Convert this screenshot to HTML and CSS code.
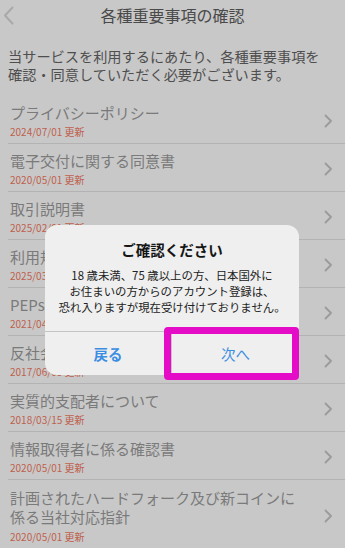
FILE: index.html
```html
<!DOCTYPE html>
<html lang="ja">
<head>
<meta charset="utf-8">
<title>各種重要事項の確認</title>
<link rel="stylesheet" href="styles.css">
</head>
<body>
<div class="screen">
  <header class="nav">
    <span class="back">
      <svg width="11" height="19" viewBox="0 0 11 19"><polyline points="9.5,1.5 2,9.5 9.5,17.5" fill="none" stroke="#a9a9a9" stroke-width="2" stroke-linecap="round" stroke-linejoin="round"/></svg>
    </span>
    <h1 class="nav-title">各種重要事項の確認</h1>
    <span></span>
  </header>
  <p class="intro">当サービスを利用するにあたり、各種重要事項を<br>確認・同意していただく必要がございます。</p>
  <ul class="list">
    <li class="item"><div class="text"><div class="name">プライバシーポリシー</div><div class="date">2024/07/01 更新</div></div><svg class="chev" width="9" height="14" viewBox="0 0 9 14"><polyline points="1.5,1.5 7,7 1.5,12.5" fill="none" stroke="#9b9b9b" stroke-width="1.8" stroke-linecap="round" stroke-linejoin="round"/></svg></li>
    <li class="item"><div class="text"><div class="name">電子交付に関する同意書</div><div class="date">2020/05/01 更新</div></div><svg class="chev" width="9" height="14" viewBox="0 0 9 14"><polyline points="1.5,1.5 7,7 1.5,12.5" fill="none" stroke="#9b9b9b" stroke-width="1.8" stroke-linecap="round" stroke-linejoin="round"/></svg></li>
    <li class="item"><div class="text"><div class="name">取引説明書</div><div class="date">2025/02/01 更新</div></div><svg class="chev" width="9" height="14" viewBox="0 0 9 14"><polyline points="1.5,1.5 7,7 1.5,12.5" fill="none" stroke="#9b9b9b" stroke-width="1.8" stroke-linecap="round" stroke-linejoin="round"/></svg></li>
    <li class="item"><div class="text"><div class="name">利用規約</div><div class="date">2025/03/01 更新</div></div><svg class="chev" width="9" height="14" viewBox="0 0 9 14"><polyline points="1.5,1.5 7,7 1.5,12.5" fill="none" stroke="#9b9b9b" stroke-width="1.8" stroke-linecap="round" stroke-linejoin="round"/></svg></li>
    <li class="item"><div class="text"><div class="name">PEPsについて</div><div class="date">2021/04/01 更新</div></div><svg class="chev" width="9" height="14" viewBox="0 0 9 14"><polyline points="1.5,1.5 7,7 1.5,12.5" fill="none" stroke="#9b9b9b" stroke-width="1.8" stroke-linecap="round" stroke-linejoin="round"/></svg></li>
    <li class="item"><div class="text"><div class="name">反社会的勢力ではないことの表明</div><div class="date">2017/06/05 更新</div></div><svg class="chev" width="9" height="14" viewBox="0 0 9 14"><polyline points="1.5,1.5 7,7 1.5,12.5" fill="none" stroke="#9b9b9b" stroke-width="1.8" stroke-linecap="round" stroke-linejoin="round"/></svg></li>
    <li class="item"><div class="text"><div class="name">実質的支配者について</div><div class="date">2018/03/15 更新</div></div><svg class="chev" width="9" height="14" viewBox="0 0 9 14"><polyline points="1.5,1.5 7,7 1.5,12.5" fill="none" stroke="#9b9b9b" stroke-width="1.8" stroke-linecap="round" stroke-linejoin="round"/></svg></li>
    <li class="item"><div class="text"><div class="name">情報取得者に係る確認書</div><div class="date">2020/05/01 更新</div></div><svg class="chev" width="9" height="14" viewBox="0 0 9 14"><polyline points="1.5,1.5 7,7 1.5,12.5" fill="none" stroke="#9b9b9b" stroke-width="1.8" stroke-linecap="round" stroke-linejoin="round"/></svg></li>
    <li class="item item-tall"><div class="text"><div class="name">計画されたハードフォーク及び新コインに<br>係る当社対応指針</div><div class="date">2020/05/01 更新</div></div><svg class="chev" width="9" height="14" viewBox="0 0 9 14"><polyline points="1.5,1.5 7,7 1.5,12.5" fill="none" stroke="#9b9b9b" stroke-width="1.8" stroke-linecap="round" stroke-linejoin="round"/></svg></li>
  </ul>

  <div class="alert">
    <div class="alert-body">
      <div class="alert-title">ご確認ください</div>
      <div class="alert-msg">18 歳未満、75 歳以上の方、日本国外に<br>お住まいの方からのアカウント登録は、<br>恐れ入りますが現在受け付けておりません。</div>
    </div>
    <div class="alert-buttons">
      <div class="btn btn-back">戻る</div>
      <div class="btn btn-next">次へ</div>
    </div>
  </div>
  <div class="highlight"></div>
</div>
</body>
</html>
```

FILE: styles.css
```css
* { box-sizing: border-box; }
html, body { margin: 0; padding: 0; }
body {
  background: #c8c8c8;
  font-family: "Noto Sans CJK JP", "Noto Sans", sans-serif;
}
.screen {
  position: relative;
  width: 345px;
  height: 548px;
  overflow: hidden;
  background: #c8c8c8;
}
.nav {
  display: grid;
  grid-template-columns: 30px 1fr 30px;
  align-items: center;
  height: 30px;
}
.back {
  display: flex;
  align-items: center;
  padding-left: 3px;
  padding-top: 0px;
}
.back svg { display: block; }
.nav-title {
  margin: 0;
  text-align: center;
  font-size: 16px;
  font-weight: 400;
  color: #4a4a4a;
  line-height: 30px;
}
.intro {
  margin: 0;
  padding: 17px 8px 13px;
  font-size: 14.2px;
  line-height: 18px;
  color: #4e4e4e;
}
.list {
  list-style: none;
  margin: 0;
  padding: 0 0 0 8px;
}
.item {
  display: flex;
  align-items: center;
  height: 48px;
  border-bottom: 1px solid #b3b3b3;
  padding: 7px 12px 4px 2px;
}
.item-tall {
  height: auto;
  padding-top: 8px;
}
.text {
  flex: 1;
  display: flex;
  flex-direction: column;
  gap: 2px;
  align-self: flex-start;
}
.name {
  font-size: 15px;
  line-height: 20px;
  color: #7a7a7a;
  white-space: nowrap;
}
.item-tall .name { line-height: 19px; }
.date {
  font-size: 10px;
  line-height: 14px;
  color: #bf5f4c;
}
.item-tall .date { margin-top: 2px; }
.chev { display: block; flex: none; }

.alert {
  position: absolute;
  left: 45px;
  top: 225px;
  width: 254px;
  background: #efefef;
  border-radius: 12px;
  overflow: hidden;
}
.alert-body {
  padding: 15px 8px 16px;
  text-align: center;
}
.alert-title {
  font-size: 14.5px;
  font-weight: 700;
  line-height: 20px;
  color: #151515;
}
.alert-msg {
  margin-top: 7px;
  font-size: 11.4px;
  line-height: 16px;
  color: #222;
}
.alert-buttons {
  display: grid;
  grid-template-columns: 1fr 1fr;
  border-top: 1px solid #c4c4c4;
  height: 44px;
}
.btn {
  display: flex;
  align-items: center;
  justify-content: center;
  font-size: 14.5px;
  color: #3b8ee2;
}
.btn-back { font-weight: 700; border-right: 1px solid #c4c4c4; }
.highlight {
  position: absolute;
  left: 164px;
  top: 327px;
  width: 135px;
  height: 53px;
  border: 7px solid #e40cc6;
  border-radius: 4px;
}
```
